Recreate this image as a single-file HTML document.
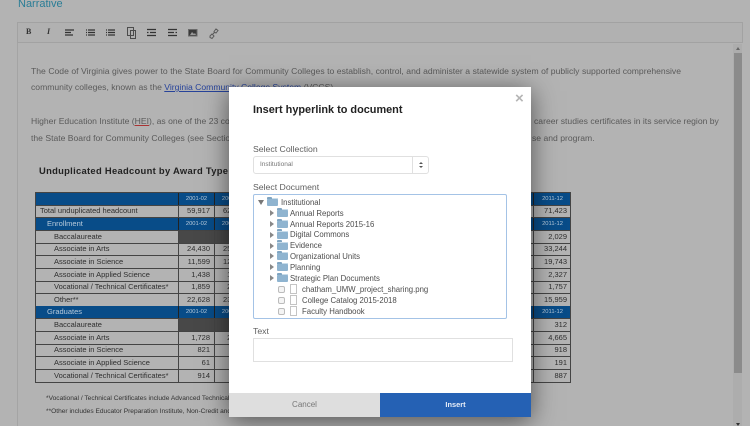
<!DOCTYPE html>
<html><head><meta charset="utf-8"><style>
html,body{margin:0;padding:0;width:750px;height:426px;overflow:hidden;background:#b3b3b3}
*{box-sizing:border-box}
body{font-family:"Liberation Sans",sans-serif;position:relative}
.a{position:absolute;white-space:nowrap}
#bg{position:absolute;left:0;top:0;width:750px;height:426px;overflow:hidden;filter:blur(.35px)}
.p{font-size:8.6px;color:#5a5a5a;line-height:13px}
.r{position:absolute;left:35px;width:536px;height:13px;border:1px solid #444;border-top:0;background:transparent;font-size:7.5px;color:#2e2e2e;line-height:12px}
.r.h{background:#084c88;color:#b9cbdb}
.r span{position:absolute;top:0}
.r .c1{left:142px;width:36px;height:12px;border-left:1px solid #444;text-align:right;padding-right:4px;top:0}
.r .c2{left:178px;width:36px;height:12px;border-left:1px solid #444;top:0;padding-left:8px}
.r .c3{left:497px;width:38px;height:12px;border-left:1px solid #444;text-align:right;padding-right:4px;top:0}
.r.h .c1,.r.h .c2,.r.h .c3{font-size:5.8px;text-align:center;padding:0;border-color:#222}
.d{background:#484848}
#m{position:absolute;left:229px;top:87px;width:302px;height:330px;background:#fff;box-shadow:0 4px 24px rgba(0,0,0,.55);filter:blur(.25px)}
.l{font-size:8.7px;color:#5f5f5f;line-height:11px}
.t{position:absolute;font-size:8.6px;line-height:11px;color:#4d4d4d;white-space:nowrap;font-family:"Liberation Sans",sans-serif;transform:scaleX(.905);transform-origin:0 50%}
.f{position:absolute;width:11px;height:8px;background:#8fb4d0;border-radius:1px;box-shadow:inset 0 1px 0 #c8dcea}
.f:before{content:"";position:absolute;left:0;top:-1.5px;width:5px;height:2px;background:#7fa5c2;border-radius:1px 1px 0 0}
.ar{position:absolute;width:0;height:0;border-left:4px solid #888;border-top:3px solid transparent;border-bottom:3px solid transparent}
.cb{position:absolute;width:7px;height:7px;border:1px solid #bbb;border-radius:2px;background:#f4f4f4}
.fi{position:absolute;width:7px;height:10px;border:1px solid #c4c4c4;background:#fff}
</style></head><body>
<div id="bg">
<div class="a" style="left:18px;top:-2px;font-size:11px;color:#2a7d96">Narrative</div>
<div class="a" style="left:17px;top:22px;width:726px;height:21px;border:1px solid #a2a2a2;background:#b1b1b1"></div>
<div class="a" style="left:17px;top:43px;width:1px;height:383px;background:#a4a4a4"></div>
<div class="a" style="left:26px;top:27px;font:bold 8px 'Liberation Serif',serif;color:#333">B</div>
<div class="a" style="left:47px;top:27px;font:italic bold 8px 'Liberation Serif',serif;color:#333">I</div>
<svg class="a" style="left:60px;top:25px" width="170" height="16" fill="none" stroke="#333" stroke-width="1.2">
<path d="M5 5h9M5 7.5h6M5 10h8"/>
<path d="M28 5h7M28 7.5h7M28 10h7M26 5h1M26 7.5h1M26 10h1"/>
<path d="M48 5h7M48 7.5h7M48 10h7M46 5h1M46 7.5h1M46 10h1"/>
<path d="M67.5 2.5h6v8h-6zM70.5 5.5h5v8h-5z" stroke="#4c4c4c" stroke-width="1"/>
<path d="M87 4.5h9M90 7.5h6M87 10.5h9M87 7.5h1.5"/>
<path d="M108 4.5h9M108 7.5h6M108 10.5h9M115.5 7.5h1.5"/>
<rect x="128.5" y="4.5" width="8.5" height="6.5" fill="#3a3a3a" stroke="#6a6a6a" stroke-width="1"/>
<path d="M130 10l2-3 2 2 1-1 1 2z" fill="#999" stroke="none"/>
<path d="M150 11l2-2 2 2-2 2.5-2-1zM154 6.5l2-2.5 2 1.5-2 2.5-2-1zM153 9l2-2" stroke="#5a5a5a" stroke-width="1"/>
</svg>
<div class="a p" style="left:31px;top:65px;word-spacing:.12px">The Code of Virginia gives power to the State Board for Community Colleges to establish, control, and administer a statewide system of publicly supported comprehensive</div>
<div class="a p" style="left:31px;top:81px">community colleges, known as the <span style="color:#27439a;text-decoration:underline">Virginia Community College System</span> (VCCS).</div>
<div class="a p" style="left:31px;top:115px">Higher Education Institute (<span style="text-decoration:underline;text-decoration-color:#a33">HEI</span>), as one of the 23 co</div>
<div class="a p" style="left:31px;top:132px">the State Board for Community Colleges (see Sectio</div>
<div class="a p" style="left:534px;top:115px">career studies certificates in its service region by</div>
<div class="a p" style="left:532px;top:132px">se and program.</div>
<div class="a" style="left:39px;top:165px;font:bold 9.4px 'Liberation Sans',sans-serif;color:#222;letter-spacing:.3px">Unduplicated Headcount by Award Type</div>

<div class="a" style="left:35px;top:192px;width:536px;height:1px;background:#444"></div>
<div id="tb">
<div class="r h" style="top:193px"><span class="c1">2001-02</span><span class="c2">2002-03</span><span class="c3">2011-12</span></div>
<div class="r" style="top:205px"><span style="left:4px">Total unduplicated headcount</span><span class="c1">59,917</span><span class="c2">62,</span><span class="c3">71,423</span></div>
<div class="r h" style="top:218px"><span style="left:11px">Enrollment</span><span class="c1">2001-02</span><span class="c2">2002-03</span><span class="c3">2011-12</span></div>
<div class="r" style="top:231px"><span style="left:18px">Baccalaureate</span><span class="c1 d"></span><span class="c2 d"></span><span class="c3">2,029</span></div>
<div class="r" style="top:243px"><span style="left:18px">Associate in Arts</span><span class="c1">24,430</span><span class="c2">25,</span><span class="c3">33,244</span></div>
<div class="r" style="top:256px"><span style="left:18px">Associate in Science</span><span class="c1">11,599</span><span class="c2">12,</span><span class="c3">19,743</span></div>
<div class="r" style="top:269px"><span style="left:18px">Associate in Applied Science</span><span class="c1">1,438</span><span class="c2">&nbsp;&nbsp;1,</span><span class="c3">2,327</span></div>
<div class="r" style="top:281px"><span style="left:18px">Vocational / Technical Certificates*</span><span class="c1">1,859</span><span class="c2">&nbsp;&nbsp;2,</span><span class="c3">1,757</span></div>
<div class="r" style="top:294px"><span style="left:18px">Other**</span><span class="c1">22,628</span><span class="c2">23,</span><span class="c3">15,959</span></div>
<div class="r h" style="top:306px"><span style="left:11px">Graduates</span><span class="c1">2001-02</span><span class="c2">2002-03</span><span class="c3">2011-12</span></div>
<div class="r" style="top:319px"><span style="left:18px">Baccalaureate</span><span class="c1 d"></span><span class="c2 d"></span><span class="c3">312</span></div>
<div class="r" style="top:332px"><span style="left:18px">Associate in Arts</span><span class="c1">1,728</span><span class="c2">&nbsp;&nbsp;2,</span><span class="c3">4,665</span></div>
<div class="r" style="top:344px"><span style="left:18px">Associate in Science</span><span class="c1">821</span><span class="c2"></span><span class="c3">918</span></div>
<div class="r" style="top:357px"><span style="left:18px">Associate in Applied Science</span><span class="c1">61</span><span class="c2"></span><span class="c3">191</span></div>
<div class="r" style="top:370px"><span style="left:18px">Vocational / Technical Certificates*</span><span class="c1">914</span><span class="c2"></span><span class="c3">887</span></div>
</div>
<div class="a" style="left:46px;top:395px;font-size:6.6px;color:#333">*Vocational / Technical Certificates include Advanced Technical Certificates</div>
<div class="a" style="left:46px;top:408px;font-size:6.6px;color:#333">**Other includes Educator Preparation Institute, Non-Credit and</div>
<div class="a" style="left:733px;top:44px;width:9px;height:382px;background:#adadad"></div>
<div class="a" style="left:734px;top:53px;width:8px;height:320px;background:#8b8b8b"></div>
<div class="a" style="left:735.5px;top:47px;border-left:2.5px solid transparent;border-right:2.5px solid transparent;border-bottom:3px solid #666"></div>
<div class="a" style="left:735.5px;top:423px;border-left:2.5px solid transparent;border-right:2.5px solid transparent;border-top:3px solid #333"></div>
</div>

<div id="m">
<div class="a" style="left:24px;top:17px;font-size:10.9px;font-weight:bold;color:#222;line-height:13px">Insert hyperlink to document</div>
<div class="a" style="left:286px;top:4px;font-size:15px;font-weight:bold;color:#b5b5b5;line-height:16px">×</div>
<div class="a l" style="left:24px;top:56.5px">Select Collection</div>
<div class="a" style="left:24px;top:69px;width:176px;height:18px;border:1px solid #e0e0e0;border-radius:3px;font-size:6.5px;color:#777;line-height:16px;padding-left:6px">Institutional</div>
<div class="a" style="left:183px;top:70px;width:1px;height:16px;background:#e0e0e0"></div>
<div class="a" style="left:189.5px;top:74.5px;border-left:2px solid transparent;border-right:2px solid transparent;border-bottom:2.5px solid #555"></div>
<div class="a" style="left:189.5px;top:79px;border-left:2px solid transparent;border-right:2px solid transparent;border-top:2.5px solid #555"></div>
<div class="a l" style="left:24px;top:94.5px">Select Document</div>
<div class="a" style="left:24px;top:107px;width:254px;height:125px;border:1px solid #a4c3e6;border-radius:2px"></div>
<div class="a" style="left:29px;top:113px;border-left:3px solid transparent;border-right:3px solid transparent;border-top:5px solid #777"></div>
<div class="f" style="left:38px;top:111px"></div><div class="t" style="left:52px;top:109.5px">Institutional</div>
<div class="ar" style="left:41px;top:123px"></div><div class="f" style="left:48px;top:122px"></div><div class="t" style="left:61px;top:120.5px">Annual Reports</div>
<div class="ar" style="left:41px;top:134px"></div><div class="f" style="left:48px;top:133px"></div><div class="t" style="left:61px;top:131.5px">Annual Reports 2015-16</div>
<div class="ar" style="left:41px;top:144.7px"></div><div class="f" style="left:48px;top:143.7px"></div><div class="t" style="left:61px;top:142.2px">Digital Commons</div>
<div class="ar" style="left:41px;top:155.7px"></div><div class="f" style="left:48px;top:154.7px"></div><div class="t" style="left:61px;top:153.2px">Evidence</div>
<div class="ar" style="left:41px;top:166.3px"></div><div class="f" style="left:48px;top:165.3px"></div><div class="t" style="left:61px;top:163.8px">Organizational Units</div>
<div class="ar" style="left:41px;top:177.3px"></div><div class="f" style="left:48px;top:176.3px"></div><div class="t" style="left:61px;top:174.8px">Planning</div>
<div class="ar" style="left:41px;top:188.3px"></div><div class="f" style="left:48px;top:187.3px"></div><div class="t" style="left:61px;top:185.8px">Strategic Plan Documents</div>
<div class="cb" style="left:49px;top:198.5px"></div><div class="fi" style="left:61px;top:197px"></div><div class="t" style="left:73px;top:196.8px">chatham_UMW_project_sharing.png</div>
<div class="cb" style="left:49px;top:209.5px"></div><div class="fi" style="left:61px;top:208px"></div><div class="t" style="left:73px;top:207.5px">College Catalog 2015-2018</div>
<div class="cb" style="left:49px;top:220.5px"></div><div class="fi" style="left:61px;top:219px"></div><div class="t" style="left:73px;top:218.5px">Faculty Handbook</div>
<div class="a l" style="left:24px;top:238.5px">Text</div>
<div class="a" style="left:24px;top:251px;width:260px;height:24px;border:1px solid #e0e0e0"></div>
<div class="a" style="left:0;top:306px;width:151px;height:24px;background:#dedede;color:#777;font-size:8px;text-align:center;line-height:23px">Cancel</div>
<div class="a" style="left:151px;top:306px;width:151px;height:24px;background:#2561b4;color:#e8eef8;font-size:7.4px;font-weight:bold;text-align:center;line-height:23px">Insert</div>
</div>
</body></html>
